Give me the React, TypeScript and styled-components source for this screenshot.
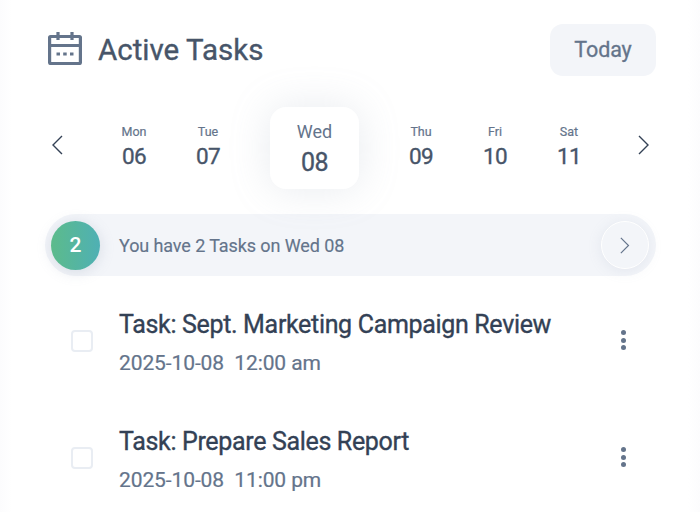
import React from 'react';
import styled, { createGlobalStyle } from 'styled-components';

const GlobalStyle = createGlobalStyle`
  html, body {
    margin: 0;
    padding: 0;
    background: #ffffff;
    font-family: 'Roboto', 'Liberation Sans', sans-serif;
  }
`;

const Page = styled.div`
  width: 700px;
  height: 512px;
  box-sizing: border-box;
  padding: 24px 44px 0 45px;
  overflow: hidden;
  background: linear-gradient(90deg, #fcfcfd, #ffffff 12px, #ffffff 688px, #fcfcfd);
`;

const Header = styled.header`
  display: flex;
  align-items: center;
  justify-content: space-between;
  height: 52px;
  padding-left: 3px;
`;

const TitleGroup = styled.div`
  display: flex;
  align-items: center;
  gap: 16px;
`;

const Title = styled.h1`
  margin: 0;
  font-size: 29.5px;
  font-weight: 400;
  -webkit-text-stroke: 0.35px;
  color: #475569;
`;

const TodayButton = styled.button`
  width: 106px;
  height: 52px;
  padding: 0 0 2px;
  border: none;
  border-radius: 13px;
  background: #f3f5f9;
  color: #64748b;
  font-family: inherit;
  font-size: 21.5px;
  font-weight: 400;
  letter-spacing: -0.1px;
  -webkit-text-stroke: 0.3px;
`;

const DateStrip = styled.div`
  display: grid;
  grid-template-columns: 24px 28px 74px 74px 139px 74px 74px 74px 50px;
  align-items: center;
  height: 82px;
  margin-top: 31px;
`;

const Arrow = styled.div<{ $end?: boolean }>`
  display: flex;
  justify-content: ${({ $end }) => ($end ? 'flex-end' : 'center')};
  padding: 0 ${({ $end }) => ($end ? '6px' : '0')} 6px 0;
  color: #334155;
`;

const DateItem = styled.div`
  display: flex;
  flex-direction: column;
  align-items: center;
  gap: 4px;
  padding-bottom: 4px;
`;

const Weekday = styled.span`
  font-size: 12.5px;
  -webkit-text-stroke: 0.2px;
  color: #64748b;
`;

const DayNum = styled.span`
  font-size: 22.5px;
  letter-spacing: -0.6px;
  -webkit-text-stroke: 0.35px;
  color: #475569;
`;

const ActiveCard = styled.div`
  justify-self: center;
  width: 89px;
  height: 82px;
  box-sizing: border-box;
  padding-top: 2px;
  display: flex;
  flex-direction: column;
  align-items: center;
  justify-content: center;
  gap: 6px;
  border-radius: 16px;
  background: #ffffff;
  box-shadow: 0 0 40px rgba(148, 163, 184, 0.22);
`;

const ActiveWeekday = styled.span`
  font-size: 18px;
  color: #64748b;
`;

const ActiveDay = styled.span`
  font-size: 25px;
  letter-spacing: -0.6px;
  -webkit-text-stroke: 0.35px;
  color: #475569;
`;

const Banner = styled.div`
  display: flex;
  align-items: center;
  height: 62px;
  margin-top: 25px;
  padding: 0 7px 0 6px;
  border-radius: 31px;
  background: #f3f5f9;
`;

const CountBadge = styled.div`
  width: 49px;
  height: 49px;
  display: flex;
  align-items: center;
  justify-content: center;
  border-radius: 50%;
  background: linear-gradient(90deg, #5cbb8b, #4fb0b4);
  box-shadow: 0 2px 14px rgba(148, 163, 184, 0.3);
  color: #ffffff;
  font-size: 21px;
  font-weight: 500;
`;

const BannerText = styled.span`
  flex: 1;
  margin-left: 19px;
  font-size: 18px;
  letter-spacing: -0.1px;
  -webkit-text-stroke: 0.15px;
  color: #64748b;
`;

const RoundButton = styled.div`
  width: 48px;
  height: 48px;
  display: flex;
  align-items: center;
  justify-content: center;
  box-sizing: border-box;
  border-radius: 50%;
  border: 1px solid #ffffff;
  background: #f3f5f9;
  box-shadow: 0 2px 14px rgba(148, 163, 184, 0.16);
  color: #64748b;
`;

const TaskList = styled.div`
  display: flex;
  flex-direction: column;
  gap: 33px;
  margin-top: 22px;
`;

const TaskRow = styled.div`
  display: grid;
  grid-template-columns: 74px 1fr 66px;
  align-items: center;
  height: 84px;
`;

const Check = styled.div`
  justify-self: end;
  margin-right: 26px;
  margin-top: 2px;
  width: 22px;
  height: 22px;
  box-sizing: border-box;
  border: 2px solid #e9edf3;
  border-radius: 4px;
  background: #ffffff;
`;

const TaskBody = styled.div`
  display: flex;
  flex-direction: column;
  gap: 12px;
  padding-top: 5px;
`;

const TaskTitle = styled.div`
  font-size: 25px;
  letter-spacing: -0.33px;
  -webkit-text-stroke: 0.35px;
  color: #334155;
`;

const TaskDate = styled.div`
  font-size: 21px;
  letter-spacing: -0.1px;
  -webkit-text-stroke: 0.2px;
  color: #64748b;
  white-space: pre;
`;

const Kebab = styled.div`
  display: flex;
  flex-direction: column;
  gap: 2.5px;
  align-items: center;
`;

const Dot = styled.span`
  width: 5px;
  height: 5px;
  border-radius: 50%;
  background: #64748b;
`;

const CalendarIcon = styled.svg`
  margin-top: -5px;
`;

const Chevron = ({ left, size = 20 }: { left?: boolean; size?: number }) => (
  <svg width={size * 0.6} height={size} viewBox="0 0 12 20" fill="none" stroke="currentColor" strokeWidth="1.4">
    <path d={left ? 'M11 1 2 10l9 9' : 'M1 1l9 9-9 9'} />
  </svg>
);

const days = [
  { name: 'Mon', day: '06' },
  { name: 'Tue', day: '07' },
  { name: 'Wed', day: '08', active: true },
  { name: 'Thu', day: '09' },
  { name: 'Fri', day: '10' },
  { name: 'Sat', day: '11' },
];

const tasks = [
  { title: 'Task: Sept. Marketing Campaign Review', date: '2025-10-08  12:00 am' },
  { title: 'Task: Prepare Sales Report', date: '2025-10-08  11:00 pm' },
];

export default function App() {
  return (
    <Page>
      <GlobalStyle />
      <Header>
        <TitleGroup>
          <CalendarIcon width="34" height="34" viewBox="0 0 34 34" fill="none" stroke="#64748b" strokeWidth="3.2">
            <rect x="1.6" y="5.5" width="30.8" height="27" rx="1" />
            <path d="M1.6 14.5h30.8M10 1v8M24 1v8" />
            <path d="M8.5 23h3.5M15.2 23h3.5M22 23h3.5" />
          </CalendarIcon>
          <Title>Active Tasks</Title>
        </TitleGroup>
        <TodayButton>Today</TodayButton>
      </Header>

      <DateStrip>
        <Arrow><Chevron left /></Arrow>
        <span />
        {days.map((d) =>
          d.active ? (
            <ActiveCard key={d.day}>
              <ActiveWeekday>{d.name}</ActiveWeekday>
              <ActiveDay>{d.day}</ActiveDay>
            </ActiveCard>
          ) : (
            <DateItem key={d.day}>
              <Weekday>{d.name}</Weekday>
              <DayNum>{d.day}</DayNum>
            </DateItem>
          )
        )}
        <Arrow $end><Chevron /></Arrow>
      </DateStrip>

      <Banner>
        <CountBadge>2</CountBadge>
        <BannerText>You have 2 Tasks on Wed 08</BannerText>
        <RoundButton><Chevron size={17} /></RoundButton>
      </Banner>

      <TaskList>
        {tasks.map((t) => (
          <TaskRow key={t.title}>
            <Check />
            <TaskBody>
              <TaskTitle>{t.title}</TaskTitle>
              <TaskDate>{t.date}</TaskDate>
            </TaskBody>
            <Kebab>
              <Dot />
              <Dot />
              <Dot />
            </Kebab>
          </TaskRow>
        ))}
      </TaskList>
    </Page>
  );
}
